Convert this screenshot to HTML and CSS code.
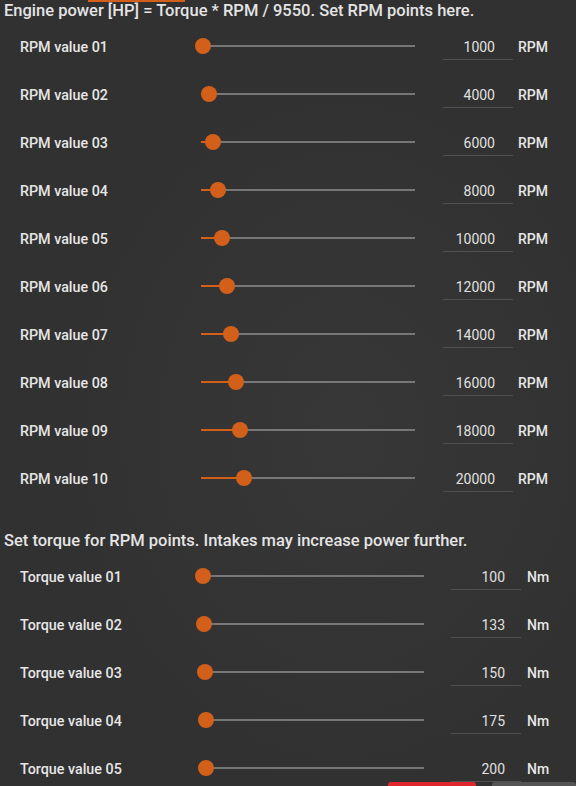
FILE: index.html
```html
<!doctype html>
<html>
<head>
    <meta charset="utf-8">
    <title>Engine power</title>
    <link rel="stylesheet" href="styles.css">
</head>
<body>
<div class="tab-mark"></div>

<div class="section rpm">
    <h2 class="title">Engine power [HP] = Torque * RPM / 9550. Set RPM points here.</h2>
    <div class="row"><span class="label">RPM value 01</span><div class="slider"><div class="fill" style="width:0.9%"></div><div class="thumb" style="left:0.9%"></div></div><div class="num">1000</div><span class="unit">RPM</span></div>
    <div class="row"><span class="label">RPM value 02</span><div class="slider"><div class="fill" style="width:3.7%"></div><div class="thumb" style="left:3.7%"></div></div><div class="num">4000</div><span class="unit">RPM</span></div>
    <div class="row"><span class="label">RPM value 03</span><div class="slider"><div class="fill" style="width:5.6%"></div><div class="thumb" style="left:5.6%"></div></div><div class="num">6000</div><span class="unit">RPM</span></div>
    <div class="row"><span class="label">RPM value 04</span><div class="slider"><div class="fill" style="width:7.9%"></div><div class="thumb" style="left:7.9%"></div></div><div class="num">8000</div><span class="unit">RPM</span></div>
    <div class="row"><span class="label">RPM value 05</span><div class="slider"><div class="fill" style="width:9.8%"></div><div class="thumb" style="left:9.8%"></div></div><div class="num">10000</div><span class="unit">RPM</span></div>
    <div class="row"><span class="label">RPM value 06</span><div class="slider"><div class="fill" style="width:12.1%"></div><div class="thumb" style="left:12.1%"></div></div><div class="num">12000</div><span class="unit">RPM</span></div>
    <div class="row"><span class="label">RPM value 07</span><div class="slider"><div class="fill" style="width:14%"></div><div class="thumb" style="left:14%"></div></div><div class="num">14000</div><span class="unit">RPM</span></div>
    <div class="row"><span class="label">RPM value 08</span><div class="slider"><div class="fill" style="width:16.4%"></div><div class="thumb" style="left:16.4%"></div></div><div class="num">16000</div><span class="unit">RPM</span></div>
    <div class="row"><span class="label">RPM value 09</span><div class="slider"><div class="fill" style="width:18.2%"></div><div class="thumb" style="left:18.2%"></div></div><div class="num">18000</div><span class="unit">RPM</span></div>
    <div class="row"><span class="label">RPM value 10</span><div class="slider"><div class="fill" style="width:20.1%"></div><div class="thumb" style="left:20.1%"></div></div><div class="num">20000</div><span class="unit">RPM</span></div>
</div>

<div class="section torque">
    <h2 class="title">Set torque for RPM points. Intakes may increase power further.</h2>
    <div class="row"><span class="label">Torque value 01</span><div class="slider"><div class="fill" style="width:0.9%"></div><div class="thumb" style="left:0.9%"></div></div><div class="num">100</div><span class="unit">Nm</span></div>
    <div class="row"><span class="label">Torque value 02</span><div class="slider"><div class="fill" style="width:1.3%"></div><div class="thumb" style="left:1.3%"></div></div><div class="num">133</div><span class="unit">Nm</span></div>
    <div class="row"><span class="label">Torque value 03</span><div class="slider"><div class="fill" style="width:1.8%"></div><div class="thumb" style="left:1.8%"></div></div><div class="num">150</div><span class="unit">Nm</span></div>
    <div class="row"><span class="label">Torque value 04</span><div class="slider"><div class="fill" style="width:2.2%"></div><div class="thumb" style="left:2.2%"></div></div><div class="num">175</div><span class="unit">Nm</span></div>
    <div class="row"><span class="label">Torque value 05</span><div class="slider"><div class="fill" style="width:2.2%"></div><div class="thumb" style="left:2.2%"></div></div><div class="num">200</div><span class="unit">Nm</span></div>
</div>

<div class="actions">
    <div class="btn btn-red"></div>
    <div class="btn btn-grey"></div>
</div>
</body>
</html>
```

FILE: styles.css
```css
*{
    margin:0;
    padding:0;
    box-sizing:border-box;
}
html,body{
    height:100%;
    overflow:hidden;
}
body{
    background:#313131;
    background-image:radial-gradient(ellipse at 60% 55%, #373737 0%, #313131 60%);
    color:#e2e2e2;
    font-family:Roboto, "Noto Sans", sans-serif;
}

.tab-mark{
    position:absolute;
    left:88px;
    top:0;
    width:97px;
    height:2px;
    background:#d2601a;
}

.title{
    height:22px;
    line-height:22px;
    padding-left:4px;
    font-size:16.5px;
    font-weight:500;
    color:#e4e4e4;
    white-space:nowrap;
}

.torque{
    margin-top:28px;
}

.row{
    display:flex;
    align-items:center;
    height:48px;
    padding-left:20px;
}
.label{
    width:181px;
    padding-top:2px;
    font-size:14.3px;
    font-weight:500;
    color:#e6e6e6;
}

.slider{
    position:relative;
    width:214px;
    height:2px;
    background:#777;
}
.torque .slider{
    width:223px;
}
.fill{
    height:2px;
    background:#d2601a;
}
.thumb{
    position:absolute;
    top:1px;
    width:16px;
    height:16px;
    margin-left:-8px;
    margin-top:-8px;
    border-radius:50%;
    background:#d2601a;
}

.num{
    width:70px;
    height:28px;
    line-height:28px;
    margin-left:28px;
    padding-top:1px;
    padding-right:18px;
    text-align:right;
    font-size:14px;
    color:#e0e0e0;
    border-bottom:1px solid #505050;
}
.torque .num{
    margin-left:27px;
    padding-right:16px;
}
.unit{
    margin-left:5px;
    padding-top:2px;
    font-size:14px;
    font-weight:500;
    color:#e6e6e6;
}
.torque .unit{
    margin-left:6px;
}

.actions{
    position:fixed;
    left:388px;
    right:0;
    bottom:0;
    height:4px;
    display:flex;
    gap:16px;
}
.btn{
    height:4px;
    border-radius:3px 3px 0 0;
}
.btn-red{
    width:88px;
    background:#e0262d;
}
.btn-grey{
    flex:1;
    background:#555;
}
```
